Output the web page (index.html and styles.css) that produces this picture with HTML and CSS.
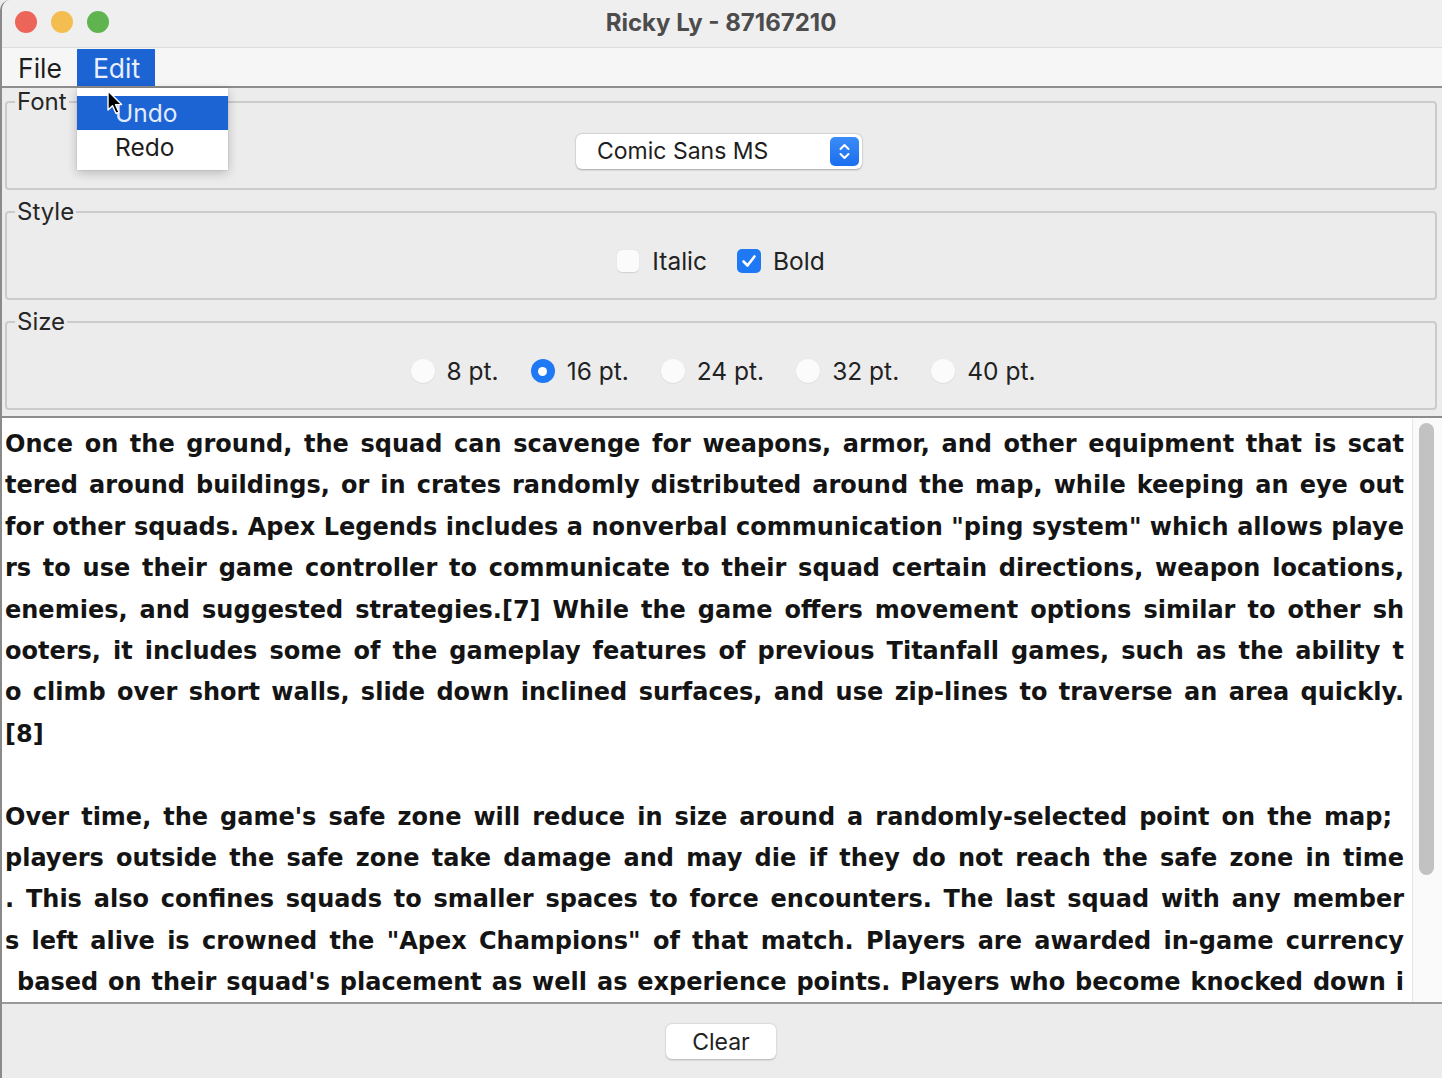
FILE: index.html
```html
<!DOCTYPE html>
<html>
<head>
<meta charset="utf-8">
<link rel="stylesheet" href="styles.css">
</head>
<body>
<div class="window">
  <div class="titlebar">
    <div class="lights">
      <span class="light red"></span>
      <span class="light yellow"></span>
      <span class="light green"></span>
    </div>
    <div class="title">Ricky Ly - 87167210</div>
  </div>
  <div class="menubar">
    <div class="menu">File</div>
    <div class="menu active">Edit</div>
  </div>
  <div class="controls">
    <fieldset class="group">
      <legend>Font</legend>
      <div class="row">
        <div class="combo">
          <span class="combo-text">Comic Sans MS</span>
          <span class="stepper">
            <svg width="29" height="29" viewBox="0 0 29 29"><path d="M10.5 12 L14.5 8 L18.5 12" fill="none" stroke="#fff" stroke-width="2" stroke-linecap="round" stroke-linejoin="round"/><path d="M10.5 17 L14.5 21 L18.5 17" fill="none" stroke="#fff" stroke-width="2" stroke-linecap="round" stroke-linejoin="round"/></svg>
          </span>
        </div>
      </div>
    </fieldset>
    <fieldset class="group">
      <legend>Style</legend>
      <div class="row">
        <label class="opt"><span class="check"></span><span class="lbl">Italic</span></label>
        <label class="opt opt-bold"><span class="check checked"><svg width="24" height="24" viewBox="0 0 24 24"><path d="M6.5 12.5 L10.5 16.5 L17.5 7.5" fill="none" stroke="#fff" stroke-width="2.6" stroke-linecap="round" stroke-linejoin="round"/></svg></span><span class="lbl">Bold</span></label>
      </div>
    </fieldset>
    <fieldset class="group">
      <legend>Size</legend>
      <div class="row radios">
        <label class="opt"><span class="radio"></span><span class="lbl">8 pt.</span></label>
        <label class="opt"><span class="radio on"></span><span class="lbl">16 pt.</span></label>
        <label class="opt"><span class="radio"></span><span class="lbl">24 pt.</span></label>
        <label class="opt"><span class="radio"></span><span class="lbl">32 pt.</span></label>
        <label class="opt"><span class="radio"></span><span class="lbl">40 pt.</span></label>
      </div>
    </fieldset>
  </div>
  <div class="editor">
    <div class="text">
      <div class="line">Once on the ground, the squad can scavenge for weapons, armor, and other equipment that is scat</div>
      <div class="line">tered around buildings, or in crates randomly distributed around the map, while keeping an eye out</div>
      <div class="line">for other squads. Apex Legends includes a nonverbal communication "ping system" which allows playe</div>
      <div class="line">rs to use their game controller to communicate to their squad certain directions, weapon locations,</div>
      <div class="line">enemies, and suggested strategies.[7] While the game offers movement options similar to other sh</div>
      <div class="line">ooters, it includes some of the gameplay features of previous Titanfall games, such as the ability t</div>
      <div class="line">o climb over short walls, slide down inclined surfaces, and use zip-lines to traverse an area quickly.</div>
      <div class="line short">[8]</div>
      <div class="line short"></div>
      <div class="line end-short">Over time, the game's safe zone will reduce in size around a randomly-selected point on the map;</div>
      <div class="line">players outside the safe zone take damage and may die if they do not reach the safe zone in time</div>
      <div class="line">. This also confines squads to smaller spaces to force encounters. The last squad with any member</div>
      <div class="line">s left alive is crowned the "Apex Champions" of that match. Players are awarded in-game currency</div>
      <div class="line indent">based on their squad's placement as well as experience points. Players who become knocked down i</div>
    </div>
    <div class="scrollbar"><div class="thumb"></div></div>
  </div>
  <div class="footer">
    <button class="btn">Clear</button>
  </div>

  <div class="dropdown">
    <div class="item selected">Undo</div>
    <div class="item">Redo</div>
  </div>
  <svg class="cursor" width="18" height="26" viewBox="0 0 18 26">
    <path d="M1 1 L1 20 L5.5 15.8 L9 23.5 L12 22.2 L8.6 14.6 L14.6 14.6 Z" fill="#000" stroke="#fff" stroke-width="1.4" stroke-linejoin="round"/>
  </svg>
</div>
</body>
</html>
```

FILE: styles.css
```css
* { box-sizing: border-box; }
html, body { margin: 0; padding: 0; }
body {
  width: 1442px;
  height: 1078px;
  overflow: hidden;
  background: #ececec;
  font-family: Inter, "Liberation Sans", sans-serif;
  color: #222;
}
.window {
  position: relative;
  width: 1442px;
  height: 1078px;
  display: flex;
  flex-direction: column;
  background: #ececec;
  border-left: 2px solid #8a8a8a;
  border-radius: 10px 0 0 0;
  overflow: hidden;
}
.titlebar {
  height: 48px;
  flex: none;
  display: flex;
  align-items: center;
  position: relative;
  background: #efefef;
  border-bottom: 1px solid #dcdcdc;
}
.lights {
  display: flex;
  gap: 14px;
  padding-left: 13px;
  margin-top: -3px;
}
.light {
  width: 22px;
  height: 22px;
  border-radius: 50%;
  display: block;
}
.red { background: #ec6558; }
.yellow { background: #f4bd50; }
.green { background: #60b450; }
.title {
  position: absolute;
  left: 0;
  right: 0;
  top: 8px;
  text-align: center;
  font-weight: 700;
  font-size: 24px;
  color: #4c4c4c;
  padding-right: 2px;
}
.menubar {
  height: 40px;
  flex: none;
  display: flex;
  align-items: stretch;
  background: #f6f6f6;
  border-bottom: 2px solid #8e8e8e;
  padding-left: 14px;
}
.menu {
  font-size: 26.5px;
  line-height: 38px;
  padding: 1px 2px 0;
  margin-right: 13px;
  color: #1e1e1e;
}
.menu.active {
  margin-top: 1px;
  padding: 0 15px 0 16px;
  background: #1c63d3;
  color: #e8f0ff;
}
.controls {
  flex: none;
  padding: 4px 5px 6px 3px;
  display: flex;
  flex-direction: column;
  gap: 12px;
}
.group {
  margin: 0;
  padding: 0;
  border: 2px solid #cbcbcb;
  border-radius: 4px;
  min-width: 0;
}
.group legend {
  margin-left: 8px;
  padding: 0 2px;
  font-size: 24px;
  line-height: 20px;
  color: #262626;
}
.row {
  height: 76px;
  display: flex;
  align-items: center;
  justify-content: center;
  padding-top: 2px;
}
.combo {
  width: 286px;
  height: 35px;
  margin-left: -4px;
  background: #fff;
  border-radius: 6px;
  box-shadow: 0 0.5px 2px rgba(0,0,0,0.28), 0 0 0 0.5px rgba(0,0,0,0.06);
  display: flex;
  align-items: center;
  justify-content: space-between;
  padding: 0 3px 0 21px;
}
.combo-text {
  font-size: 23px;
  color: #1e1e1e;
}
.stepper {
  width: 29px;
  height: 29px;
  border-radius: 5px;
  background: linear-gradient(#3b8cf7, #1a6ef0);
  display: block;
}
.stepper svg { display: block; }
.opt {
  display: flex;
  align-items: center;
  font-size: 24.5px;
  color: #222;
}
.opt-bold { margin-left: 30px; }
.check {
  width: 22px;
  height: 22px;
  border-radius: 5px;
  background: #fbfbfb;
  box-shadow: 0 0.5px 1px rgba(0,0,0,0.12);
  margin-right: 13px;
  display: block;
}
.check.checked {
  width: 24px;
  height: 24px;
  background: #1f79f4;
  box-shadow: none;
  margin-right: 12px;
}
.check svg { display: block; }
.radios { padding-left: 4px; }
.radios .opt { margin-right: 32px; }
.radios .opt:last-child { margin-right: 0; }
.radio {
  width: 24px;
  height: 24px;
  border-radius: 50%;
  background: #fbfbfb;
  box-shadow: 0 0.5px 1px rgba(0,0,0,0.12);
  margin-right: 12px;
  display: block;
  position: relative;
}
.radio.on {
  background: #1f79f4;
  box-shadow: none;
}
.radio.on::after {
  content: "";
  position: absolute;
  left: 7.5px;
  top: 7.5px;
  width: 9px;
  height: 9px;
  border-radius: 50%;
  background: #fff;
}
.editor {
  flex: 1;
  display: flex;
  background: #fff;
  border-top: 2px solid #8c8c8c;
  border-bottom: 2px solid #9a9a9a;
  min-height: 0;
}
.text {
  flex: 1;
  overflow: hidden;
  padding: 6px 8px 0 3px;
  font-family: "DejaVu Sans", sans-serif;
  font-weight: 700;
  font-size: 24px;
  line-height: 41.4px;
  color: #141414;
}
.line {
  white-space: nowrap;
  height: 41.4px;
  text-align: justify;
  text-align-last: justify;
}
.line.short {
  text-align: left;
  text-align-last: left;
}
.line.end-short { margin-right: 12px; }
.line.indent { padding-left: 12px; }
.scrollbar {
  width: 30px;
  flex: none;
  background: #fafafa;
  border-left: 1px solid #e6e6e6;
  padding: 5px 7px 0 6px;
}
.thumb {
  width: 15px;
  height: 452px;
  border-radius: 8px;
  background: #c2c2c2;
}
.footer {
  height: 74px;
  flex: none;
  display: flex;
  justify-content: center;
  align-items: flex-start;
  padding-top: 20px;
}
.btn {
  width: 110px;
  height: 35px;
  border: none;
  border-radius: 6px;
  background: #fff;
  box-shadow: 0 0.5px 2px rgba(0,0,0,0.25);
  font-family: Inter, "Liberation Sans", sans-serif;
  font-size: 23px;
  color: #222;
  padding: 0;
  margin-left: -2px;
}
.dropdown {
  position: absolute;
  left: 75px;
  top: 88px;
  width: 151px;
  padding: 8px 0 6px;
  background: #fff;
  box-shadow: 0 3px 10px rgba(0,0,0,0.22), 0 0 0 0.5px rgba(0,0,0,0.08);
}
.item {
  height: 34px;
  line-height: 34px;
  padding-left: 38px;
  font-size: 24.5px;
  color: #1e1e1e;
}
.item.selected {
  background: #1c63d3;
  color: #e3ecff;
}
.cursor {
  position: absolute;
  left: 105px;
  top: 90px;
}
```
